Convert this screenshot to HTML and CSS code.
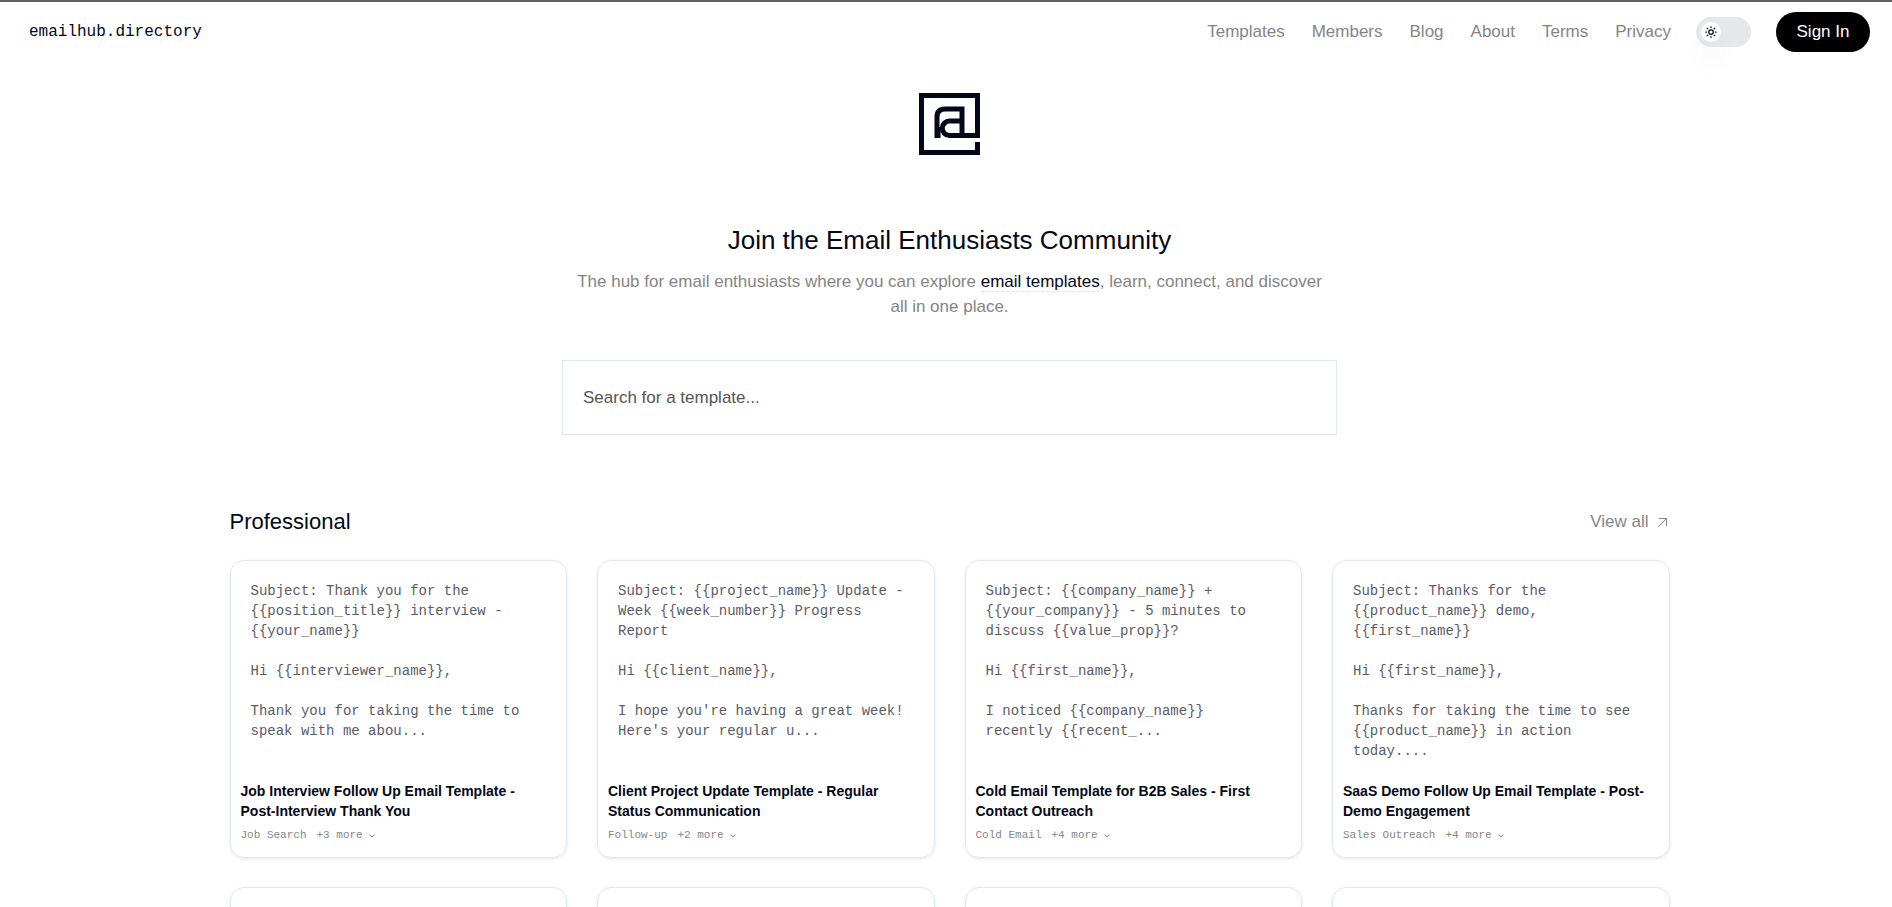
FILE: index.html
```
<!DOCTYPE html>
<html lang="en">

    <head>
        <meta charset="UTF-8">
        <meta name="viewport" content="width=device-width, initial-scale=1.0">
        <title>emailhub.directory</title>
        <link rel="stylesheet" href="styles.css">
    </head>

    <body>
        <header class="site-header">
            <a class="brand" href="#">emailhub.directory</a>
            <div class="header-right">
                <nav class="site-nav">
                    <a href="#">Templates</a>
                    <a href="#">Members</a>
                    <a href="#">Blog</a>
                    <a href="#">About</a>
                    <a href="#">Terms</a>
                    <a href="#">Privacy</a>
                </nav>
                <button class="theme-toggle" type="button" aria-label="Toggle theme">
                    <span class="knob">
                        <svg width="12" height="12" viewBox="0 0 24 24" fill="none" stroke="currentColor" stroke-width="2.5" stroke-linecap="round">
                            <circle cx="12" cy="12" r="4.5" />
                            <path d="M12 1.5V3M12 21v1.5M1.5 12H3M21 12h1.5M4.6 4.6l1 1M18.4 18.4l1 1M4.6 19.4l1-1M18.4 5.6l1-1" />
                        </svg>
                    </span>
                </button>
                <button class="btn-signin" type="button">Sign In</button>
            </div>
        </header>

        <main>
            <section class="hero">
                <svg class="emblem" width="61" height="62" viewBox="0 0 61 62" fill="none" stroke="currentColor" stroke-width="5">
                    <path d="M58.5 49v10.5h-56v-57h56v40H41" />
                    <path d="M18 45V24q0-8 8-8h17V44" />
                    <path d="M43 28H30.5a7.25 7.25 0 0 0 0 14.5H43" />
                    <path d="M20.5 34v11" stroke-width="2" />
                </svg>
                <h1>Join the Email Enthusiasts Community</h1>
                <p>The hub for email enthusiasts where you can explore <a href="#">email templates</a>, learn, connect, and discover all in one place.</p>
                <input class="search" type="text" placeholder="Search for a template..." aria-label="Search for a template">
            </section>

            <section class="category">
                <div class="category-head">
                    <h2>Professional</h2>
                    <a class="view-all" href="#">View all
                        <svg width="9" height="9" viewBox="0 0 9 9" fill="none" stroke="currentColor"><path d="M.5 8.5l8-8M1 .5h7.5V8" /></svg>
                    </a>
                </div>

                <div class="cards">
                    <article class="card">
                        <pre>Subject: Thank you for the
{{position_title}} interview -
{{your_name}}

Hi {{interviewer_name}},

Thank you for taking the time to
speak with me abou...</pre>
                        <h3>Job Interview Follow Up Email Template - <br>Post-Interview Thank You</h3>
                        <div class="tags">
                            <span>Job Search</span>
                            <button type="button">+3 more <svg width="6" height="4" viewBox="0 0 6 4" fill="none" stroke="currentColor"><path d="M.5.5L3 3 5.5.5" /></svg></button>
                        </div>
                    </article>
                    <article class="card">
                        <pre>Subject: {{project_name}} Update -
Week {{week_number}} Progress
Report

Hi {{client_name}},

I hope you're having a great week!
Here's your regular u...</pre>
                        <h3>Client Project Update Template - Regular <br>Status Communication</h3>
                        <div class="tags">
                            <span>Follow-up</span>
                            <button type="button">+2 more <svg width="6" height="4" viewBox="0 0 6 4" fill="none" stroke="currentColor"><path d="M.5.5L3 3 5.5.5" /></svg></button>
                        </div>
                    </article>
                    <article class="card">
                        <pre>Subject: {{company_name}} +
{{your_company}} - 5 minutes to
discuss {{value_prop}}?

Hi {{first_name}},

I noticed {{company_name}}
recently {{recent_...</pre>
                        <h3>Cold Email Template for B2B Sales - First <br>Contact Outreach</h3>
                        <div class="tags">
                            <span>Cold Email</span>
                            <button type="button">+4 more <svg width="6" height="4" viewBox="0 0 6 4" fill="none" stroke="currentColor"><path d="M.5.5L3 3 5.5.5" /></svg></button>
                        </div>
                    </article>
                    <article class="card">
                        <pre>Subject: Thanks for the
{{product_name}} demo,
{{first_name}}

Hi {{first_name}},

Thanks for taking the time to see
{{product_name}} in action
today....</pre>
                        <h3>SaaS Demo Follow Up Email Template - Post-<br>Demo Engagement</h3>
                        <div class="tags">
                            <span>Sales Outreach</span>
                            <button type="button">+4 more <svg width="6" height="4" viewBox="0 0 6 4" fill="none" stroke="currentColor"><path d="M.5.5L3 3 5.5.5" /></svg></button>
                        </div>
                    </article>
                    <article class="card"></article>
                    <article class="card"></article>
                    <article class="card"></article>
                    <article class="card"></article>
                </div>
            </section>
        </main>
    </body>

</html>
```
FILE: styles.css
```
* {
    box-sizing: border-box;
}

html {
    scrollbar-width: none;
}

body {
    margin: 0;
    padding-left: 7px;
    border-top: 2px solid #616161;
    background-color: white;
    color: #020817;
    font-family: "Liberation Sans", Arial, sans-serif;
    font-size: 17px;
}

a {
    color: inherit;
    text-decoration: none;
}

button {
    border: none;
    padding: 0;
    background: none;
    color: inherit;
    font: inherit;
    cursor: pointer;
}

h1,
h2,
h3,
p,
pre {
    margin: 0;
    font-weight: normal;
}

.site-header {
    display: flex;
    justify-content: space-between;
    align-items: center;
    height: 60px;
    padding: 0 22px;
}

.brand {
    font-family: "Liberation Mono", monospace;
    font-size: 16px;
}

.header-right {
    display: flex;
    align-items: center;
    gap: 25px;
}

.site-nav {
    display: flex;
    gap: 27px;
    color: #858585;
}

.theme-toggle {
    width: 55px;
    height: 30px;
    padding: 5px;
    border-radius: 15px;
    background-color: #e5e7eb;
}

.knob {
    display: flex;
    align-items: center;
    justify-content: center;
    width: 20px;
    height: 20px;
    border-radius: 50%;
    background-color: white;
    color: #020817;
    box-shadow: 0 20px 25px rgba(0, 0, 0, 0.05);
}

.btn-signin {
    width: 94px;
    height: 40px;
    border-radius: 20px;
    background-color: black;
    color: white;
}

.hero {
    display: flex;
    flex-direction: column;
    align-items: center;
    max-width: 775px;
    margin: 0 auto;
    padding-top: 31px;
    text-align: center;
}

.hero h1 {
    margin-top: 68px;
    font-size: 26px;
    line-height: 34px;
}

.hero p {
    margin-top: 12px;
    padding: 0 10px;
    color: #858585;
    line-height: 25px;
}

.hero p a {
    border-bottom: 1px dashed #dbe4f0;
    color: #020817;
}

.search {
    width: 100%;
    height: 75px;
    margin-top: 41px;
    padding: 0 20px;
    border: 1px solid #e2e8f0;
    font: inherit;
}

.search::placeholder {
    color: #555;
}

.category {
    max-width: 1440px;
    margin: 72px auto 0;
}

.category-head {
    display: flex;
    justify-content: space-between;
    align-items: center;
    height: 30px;
    padding-right: 3px;
}

.category-head h2 {
    font-size: 22px;
}

.view-all {
    display: flex;
    align-items: center;
    gap: 9px;
    color: #858585;
}

.cards {
    display: grid;
    grid-template-columns: repeat(4, 1fr);
    grid-auto-rows: minmax(298px, auto);
    gap: 29px 30px;
    margin-top: 23px;
}

.card {
    padding: 20px 10px 8px;
    border: 1px solid #e2e8f0;
    border-radius: 14px;
    box-shadow: 0 1px 3px rgba(0, 0, 0, 0.1);
}

.card pre {
    height: 200px;
    padding: 0 10px;
    color: #5b5b66;
    font-family: "Liberation Mono", monospace;
    font-size: 14px;
    line-height: 20px;
}

.card h3 {
    font-size: 14px;
    font-weight: bold;
    line-height: 20px;
}

.tags {
    display: flex;
    align-items: center;
    gap: 10px;
    height: 28px;
    color: #858585;
    font-family: "Liberation Mono", monospace;
    font-size: 11px;
}
```
